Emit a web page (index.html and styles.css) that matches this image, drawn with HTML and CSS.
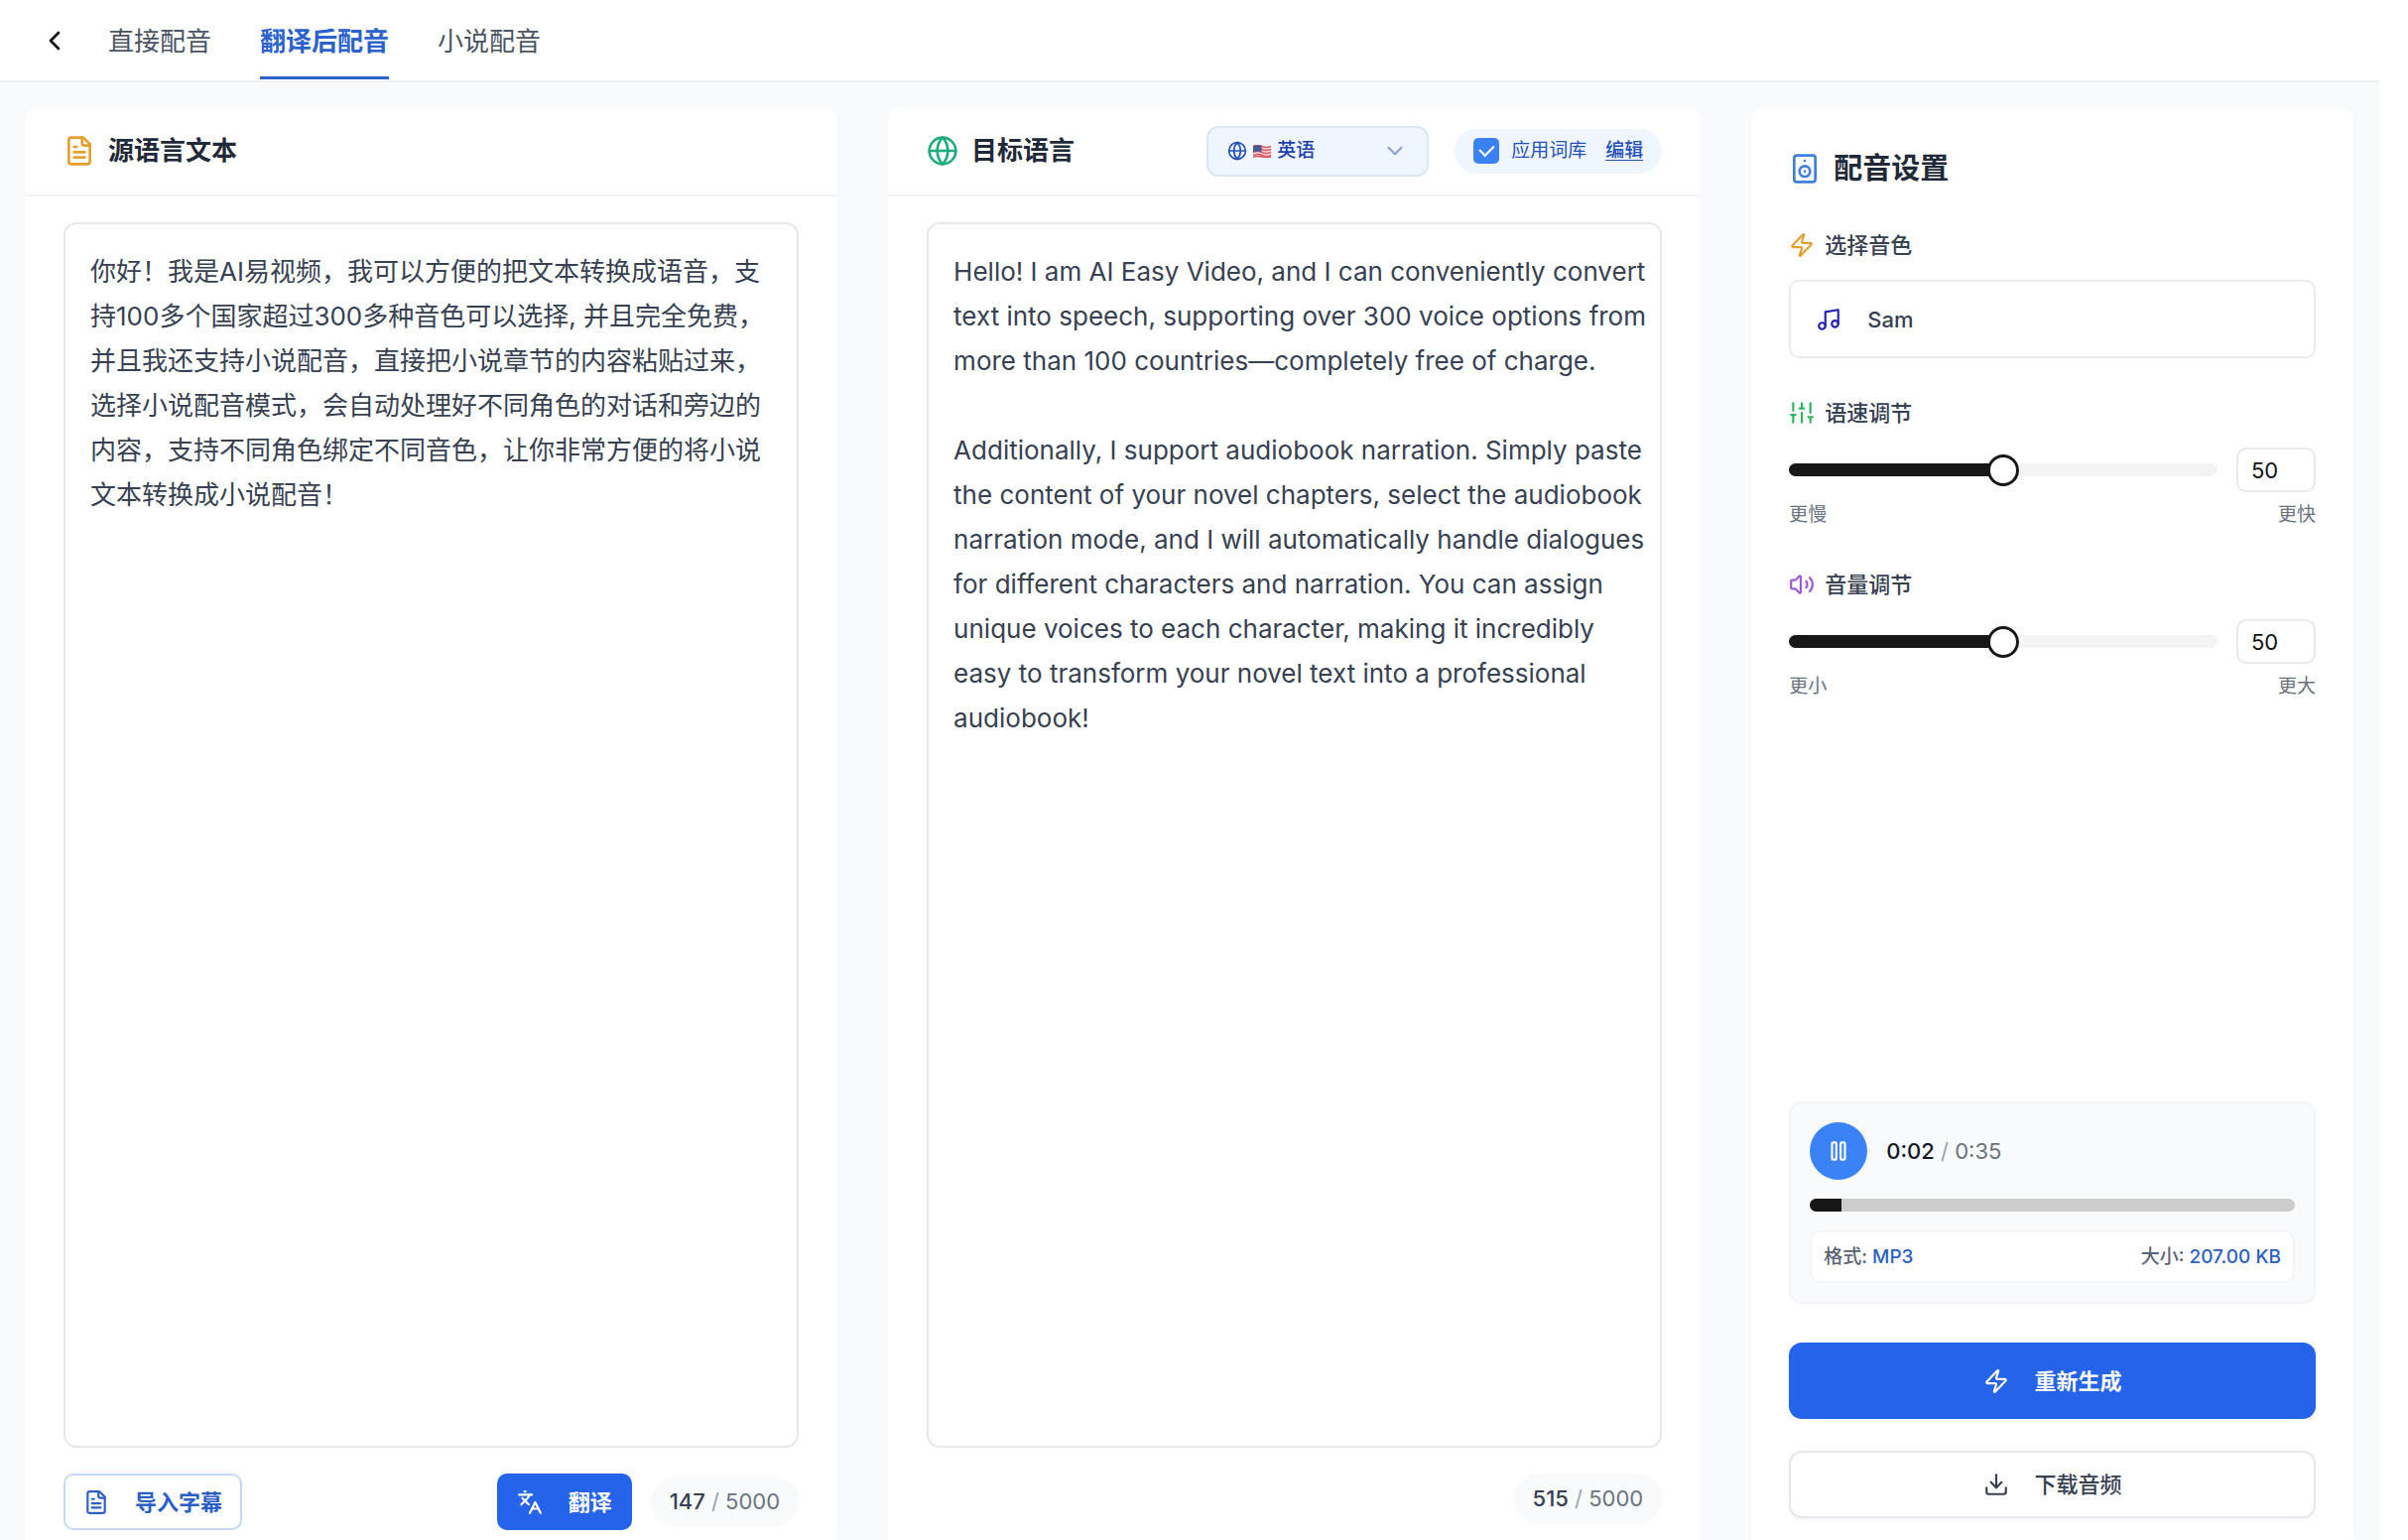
FILE: index.html
```html
<!DOCTYPE html>
<html lang="zh-CN">
<head>
  <meta charset="UTF-8" />
  <meta name="viewport" content="width=device-width, initial-scale=1.0" />
  <title>翻译后配音</title>
  <link rel="stylesheet" href="styles.css">
</head>
<body>
<header class="topbar">
  <button type="button" class="back-btn" aria-label="返回">
    <svg class="icon-lg" viewBox="0 0 24 24"><path d="m15 18-6-6 6-6"/></svg>
  </button>
  <nav class="tabs">
    <a href="#direct">直接配音</a>
    <a href="#translate" class="active">翻译后配音</a>
    <a href="#novel">小说配音</a>
  </nav>
</header>

<main class="workspace">
  <!-- source text -->
  <section class="card">
    <div class="card-header">
      <svg class="icon-lg amber" viewBox="0 0 24 24"><path d="M15 2H6a2 2 0 0 0-2 2v16a2 2 0 0 0 2 2h12a2 2 0 0 0 2-2V7Z"/><path d="M14 2v4a2 2 0 0 0 2 2h4"/><path d="M10 9H8"/><path d="M16 13H8"/><path d="M16 17H8"/></svg>
      <h2><label for="source">源语言文本</label></h2>
    </div>
    <div class="card-body">
      <textarea id="source" spellcheck="false">你好！我是AI易视频，我可以方便的把文本转换成语音，支持100多个国家超过300多种音色可以选择, 并且完全免费，并且我还支持小说配音，直接把小说章节的内容粘贴过来，选择小说配音模式，会自动处理好不同角色的对话和旁边的内容，支持不同角色绑定不同音色，让你非常方便的将小说文本转换成小说配音！</textarea>
      <div class="card-footer">
        <button type="button" class="btn btn-import">
          <svg class="icon-sm" viewBox="0 0 24 24"><path d="M15 2H6a2 2 0 0 0-2 2v16a2 2 0 0 0 2 2h12a2 2 0 0 0 2-2V7Z"/><path d="M14 2v4a2 2 0 0 0 2 2h4"/><path d="M10 9H8"/><path d="M16 13H8"/><path d="M16 17H8"/></svg>
          导入字幕
        </button>
        <div class="footer-right">
          <button type="button" class="btn btn-translate">
            <svg class="icon-sm" viewBox="0 0 24 24"><path d="M2 5h12"/><path d="M7 2h1"/><path d="m5 8 6 6"/><path d="m4 14 6-6 2-3"/><path d="m22 22-5-10-5 10"/><path d="M14 18h6"/></svg>
            翻译
          </button>
          <span class="counter"><b>147</b> <i>/</i> 5000</span>
        </div>
      </div>
    </div>
  </section>

  <!-- translated text -->
  <section class="card">
    <div class="card-header">
      <svg class="icon-lg green" viewBox="0 0 24 24"><circle cx="12" cy="12" r="10"/><path d="M12 2a14.500 14.500 0 0 0 0 20 14.500 14.500 0 0 0 0-20"/><path d="M2 12h20"/></svg>
      <h2><label for="target">目标语言</label></h2>
      <div class="header-tools">
        <div class="lang-select">
          <svg class="icon-xs" viewBox="0 0 24 24"><circle cx="12" cy="12" r="10"/><path d="M12 2a14.500 14.500 0 0 0 0 20 14.500 14.500 0 0 0 0-20"/><path d="M2 12h20"/></svg>
          <svg class="flag" viewBox="0 0 18 13">
            <path d="M0 1q4.500-2 9 0t9 0v11q-4.500 2-9 0t-9 0z" fill="#f3d9dc" stroke="none"/>
            <path d="M0 1.500q4.500-2 9 0t9 0M0 4.500q4.500-2 9 0t9 0M0 7.500q4.500-2 9 0t9 0M0 10.500q4.500-2 9 0t9 0M0 12q4.500-1 9 0t9 0" fill="none" stroke="#dd5b66" stroke-width="1.500"/>
            <path d="M0 1q4-1.600 8.500-.2v6.400q-4.500-1.400-8.500.2z" fill="#46588f" stroke="none"/>
          </svg>
          <select aria-label="目标语言">
            <option>英语</option>
          </select>
          <svg class="icon-sm chevron" viewBox="0 0 24 24"><path d="m6 9 6 6 6-6"/></svg>
        </div>
        <div class="glossary">
          <input type="checkbox" id="glossary" checked />
          <label for="glossary">应用词库</label>
          <a href="#glossary-edit">编辑</a>
        </div>
      </div>
    </div>
    <div class="card-body">
      <textarea id="target" lang="en" spellcheck="false">Hello! I am AI Easy Video, and I can conveniently convert text into speech, supporting over 300 voice options from more than 100 countries—completely free of charge.

Additionally, I support audiobook narration. Simply paste the content of your novel chapters, select the audiobook narration mode, and I will automatically handle dialogues for different characters and narration. You can assign unique voices to each character, making it incredibly easy to transform your novel text into a professional audiobook!</textarea>
      <div class="card-footer">
        <div class="footer-right">
          <span class="counter"><b>515</b> <i>/</i> 5000</span>
        </div>
      </div>
    </div>
  </section>

  <!-- voice settings -->
  <aside class="card settings">
    <h2 class="settings-title">
      <svg class="icon-lg blue" viewBox="0 0 24 24"><rect x="4" y="2" width="16" height="20" rx="2"/><path d="M12 6h.01"/><circle cx="12" cy="14" r="4"/><path d="M12 14h.01"/></svg>
      配音设置
    </h2>

    <div class="setting">
      <h3>
        <svg class="icon-sm amber" viewBox="0 0 24 24"><path d="M4 14a1 1 0 0 1-.78-1.630l9.900-10.200a.5.5 0 0 1 .86.460l-1.920 6.020A1 1 0 0 0 13 10h7a1 1 0 0 1 .78 1.630l-9.900 10.200a.5.5 0 0 1-.86-.460l1.920-6.020A1 1 0 0 0 11 14z"/></svg>
        选择音色
      </h3>
      <button type="button" class="voice-btn">
        <svg class="icon-sm" viewBox="0 0 24 24"><path d="M9 18V5l12-2v13"/><circle cx="6" cy="18" r="3"/><circle cx="18" cy="16" r="3"/></svg>
        Sam
      </button>
    </div>

    <div class="setting">
      <h3>
        <svg class="icon-sm lime" viewBox="0 0 24 24"><path d="M4 21v-7M4 10V3M12 21v-9M12 8V3M20 21v-5M20 12V3M2 14h4M10 8h4M18 16h4"/></svg>
        <label for="speed">语速调节</label>
      </h3>
      <div class="slider-row">
        <input type="range" id="speed" min="0" max="100" value="50" style="--value: 50%" />
        <input type="text" inputmode="numeric" value="50" aria-label="语速" />
      </div>
      <div class="range-labels"><span>更慢</span><span>更快</span></div>
    </div>

    <div class="setting">
      <h3>
        <svg class="icon-sm purple" viewBox="0 0 24 24"><path d="M11 4.700a.7.700 0 0 0-1.200-.5L6.400 7.600A1.400 1.400 0 0 1 5.400 8H3a1 1 0 0 0-1 1v6a1 1 0 0 0 1 1h2.400a1.400 1.400 0 0 1 1 .4l3.400 3.400a.7.700 0 0 0 1.200-.5z"/><path d="M16 9a5 5 0 0 1 0 6"/><path d="M19.400 18.400a9 9 0 0 0 0-12.700"/></svg>
        <label for="volume">音量调节</label>
      </h3>
      <div class="slider-row">
        <input type="range" id="volume" min="0" max="100" value="50" style="--value: 50%" />
        <input type="text" inputmode="numeric" value="50" aria-label="音量" />
      </div>
      <div class="range-labels"><span>更小</span><span>更大</span></div>
    </div>

    <div class="player">
      <div class="player-top">
        <button type="button" class="play-btn" aria-label="暂停">
          <svg class="icon-sm" viewBox="0 0 24 24"><rect x="14" y="4" width="4" height="16" rx="1"/><rect x="6" y="4" width="4" height="16" rx="1"/></svg>
        </button>
        <span class="time"><b>0:02</b> <i>/</i> 0:35</span>
      </div>
      <progress value="6.6" max="100" aria-label="播放进度"></progress>
      <div class="file-info">
        <span>格式: <em>MP3</em></span>
        <span>大小: <em>207.00 KB</em></span>
      </div>
    </div>

    <button type="button" class="btn btn-generate">
      <svg class="icon-sm" viewBox="0 0 24 24"><path d="M4 14a1 1 0 0 1-.78-1.630l9.900-10.200a.5.5 0 0 1 .86.460l-1.920 6.020A1 1 0 0 0 13 10h7a1 1 0 0 1 .78 1.630l-9.900 10.200a.5.5 0 0 1-.86-.460l1.920-6.020A1 1 0 0 0 11 14z"/></svg>
      重新生成
    </button>
    <button type="button" class="btn btn-download">
      <svg class="icon-sm" viewBox="0 0 24 24"><path d="M21 15v4a2 2 0 0 1-2 2H5a2 2 0 0 1-2-2v-4"/><path d="m7 10 5 5 5-5"/><path d="M12 15V3"/></svg>
      下载音频
    </button>
  </aside>
</main>

<script>
  document.querySelectorAll('.slider-row').forEach(row => {
    const range = row.querySelector('input[type="range"]');
    const box = row.querySelector('input[type="text"]');
    function update(value) {
      range.value = value;
      box.value = range.value;
      range.style.setProperty('--value', range.value + '%');
    }
    range.addEventListener('input', () => update(range.value));
    box.addEventListener('change', () => update(box.value));
  });
</script>
</body>
</html>
```
FILE: styles.css
```css
* {
  box-sizing: border-box;
}
body {
  margin: 0;
  padding-right: 29px;
  height: 100vh;
  display: flex;
  flex-direction: column;
  background: #fff;
  color: #374151;
  font-family: Inter, "Noto Sans CJK SC", sans-serif;
  font-size: 22px;
  line-height: 32px;
}
button, input, select, textarea {
  font: inherit;
  color: inherit;
}
button {
  cursor: pointer;
}
h2, h3 {
  margin: 0;
}
b, i, em {
  font-style: normal;
}
svg {
  flex: none;
  fill: none;
  stroke: currentColor;
  stroke-width: 2;
  stroke-linecap: round;
  stroke-linejoin: round;
}
.icon-xs {
  width: 20px;
  height: 20px;
}
.icon-sm {
  width: 26px;
  height: 26px;
}
.icon-lg {
  width: 32px;
  height: 32px;
}
.amber {
  color: #e5a02c;
}
.green {
  color: #22ab7c;
}
.lime {
  color: #2fb45c;
}
.blue {
  color: #3f7fdc;
}
.purple {
  color: #9b59dc;
}

/* top bar */
.topbar {
  display: flex;
  align-items: center;
  gap: 38px;
  height: 83px;
  flex: none;
  padding: 0 39px;
  border-bottom: 2px solid #eef0f3;
}
.back-btn {
  display: flex;
  padding: 0;
  border: none;
  background: none;
  color: #111;
}
.tabs {
  display: flex;
  gap: 49px;
  height: 100%;
}
.tabs a {
  height: 80px;
  line-height: 84px;
  font-size: 26px;
  color: #4b5563;
  text-decoration: none;
}
.tabs a.active {
  color: #2b62cc;
  font-weight: 600;
  border-bottom: 3px solid #2b62cc;
}

/* columns */
.workspace {
  flex: 1;
  min-height: 0;
  display: grid;
  grid-template-columns: 27fr 27fr 20fr;
  gap: 51px;
  padding: 25px 26px 0 25px;
  background: #f8fafc;
}
.card {
  display: flex;
  flex-direction: column;
  min-width: 0;
  background: #fff;
  border-radius: 13px 13px 0 0;
  box-shadow: 0 0 2px rgba(0, 0, 0, 0.04);
}
.card-header {
  display: flex;
  align-items: center;
  gap: 13px;
  height: 90px;
  padding: 0 39px;
  border-bottom: 2px solid #f1f3f5;
}
.card-header h2 {
  font-size: 26px;
  font-weight: 600;
  color: #1f2937;
}
.card-body {
  flex: 1;
  display: flex;
  flex-direction: column;
  padding: 26px 39px 10px;
}
.card-body textarea {
  flex: 1;
  width: 100%;
  padding: 25px 12px 25px 25px;
  border: 2px solid #e5e7eb;
  border-radius: 13px;
  background: #fff;
  font-size: 26px;
  line-height: 45px;
  resize: none;
  outline: none;
}
.card-footer {
  display: flex;
  justify-content: space-between;
  align-items: flex-start;
  height: 83px;
  padding-top: 26px;
}
.footer-right {
  display: flex;
  align-items: center;
  gap: 19px;
  margin-left: auto;
}
.counter {
  padding: 0 19px;
  line-height: 51px;
  border-radius: 26px;
  background: #f8fafc;
  color: #6b7280;
}
.counter b {
  font-weight: 500;
  color: #374151;
}
.counter i, .time i {
  color: #9ca3af;
}

/* buttons */
.btn {
  display: flex;
  align-items: center;
  justify-content: center;
  gap: 26px;
  height: 57px;
  padding: 0 18px;
  border: 2px solid transparent;
  border-radius: 10px;
  font-weight: 600;
}
.btn-import {
  background: #fff;
  border-color: #c5d9f2;
  color: #2b5fc4;
}
.btn-translate, .btn-generate {
  background: #2563eb;
  color: #fff;
}
.btn-generate {
  height: 77px;
  margin: 39px 0 32px;
  border-radius: 13px;
}
.btn-download {
  height: 68px;
  border-color: #e5e7eb;
  border-radius: 13px;
  background: #fff;
  font-weight: 500;
  box-shadow: 0 2px 3px rgba(0, 0, 0, 0.04);
}

/* target language tools */
.header-tools {
  display: flex;
  align-items: center;
  gap: 26px;
  margin-left: auto;
  font-size: 19px;
  color: #2450b8;
}
.lang-select {
  display: flex;
  align-items: center;
  gap: 6px;
  width: 224px;
  height: 51px;
  padding: 0 19px;
  border: 2px solid #dbe7f5;
  border-radius: 12px;
  background: #eff6ff;
}
.flag {
  width: 18px;
  height: 13px;
}
.lang-select select {
  flex: 1;
  min-width: 0;
  padding: 0;
  border: none;
  background: none;
  appearance: none;
  font-weight: 500;
  color: #1e40af;
  outline: none;
}
.chevron {
  color: #8ea2d8;
}
.glossary {
  display: flex;
  align-items: center;
  gap: 12px;
  height: 45px;
  padding: 0 19px;
  border-radius: 23px;
  background: #eff6ff;
}
.glossary input {
  appearance: none;
  display: grid;
  place-items: center;
  width: 26px;
  height: 26px;
  margin: 0;
  border-radius: 5px;
  background: #3b82f6;
}
.glossary input:checked::before {
  content: "";
  width: 7px;
  height: 12px;
  margin-bottom: 4px;
  border: solid #fff;
  border-width: 0 2px 2px 0;
  transform: rotate(45deg);
}
.glossary a {
  margin-left: 7px;
  color: #2450b8;
  font-weight: 500;
  text-underline-offset: 3px;
}

/* settings */
.settings {
  padding: 39px 38px 22px;
}
.settings-title {
  display: flex;
  align-items: center;
  gap: 13px;
  font-size: 29px;
  line-height: 45px;
  font-weight: 600;
  color: #1f2937;
}
.setting {
  margin-top: 39px;
}
.setting h3 {
  display: flex;
  align-items: center;
  gap: 10px;
  margin-bottom: 19px;
  font-size: 22px;
  font-weight: 500;
}
.voice-btn {
  display: flex;
  align-items: center;
  gap: 26px;
  width: 100%;
  height: 79px;
  padding: 0 25px;
  border: 2px solid #eaebed;
  border-radius: 10px;
  background: #fff;
  font-weight: 500;
}
.voice-btn svg {
  color: #2522b4;
}
.slider-row {
  display: flex;
  align-items: center;
  gap: 19px;
}
.slider-row input[type="range"] {
  appearance: none;
  flex: 1;
  min-width: 0;
  height: 13px;
  margin: 0;
  border-radius: 7px;
  background: linear-gradient(to right, #171717 var(--value), #f4f4f4 var(--value));
}
.slider-row input[type="range"]::-webkit-slider-thumb {
  appearance: none;
  width: 32px;
  height: 32px;
  border: 3px solid #171717;
  border-radius: 50%;
  background: #fff;
}
.slider-row input[type="text"] {
  width: 80px;
  height: 45px;
  padding: 0 13px;
  border: 2px solid #e8e9eb;
  border-radius: 10px;
  color: #111;
}
.range-labels {
  display: flex;
  justify-content: space-between;
  margin-top: 8px;
  font-size: 19px;
  line-height: 30px;
  color: #6b7280;
}

/* player */
.player {
  display: flex;
  flex-direction: column;
  gap: 19px;
  margin-top: auto;
  padding: 19px;
  border: 2px solid #f1f3f6;
  border-radius: 13px;
  background: #f8fafc;
}
.player-top {
  display: flex;
  align-items: center;
  gap: 19px;
}
.play-btn {
  display: grid;
  place-items: center;
  width: 58px;
  height: 58px;
  padding: 0;
  border: none;
  border-radius: 50%;
  background: #3b82f6;
  color: #fff;
}
.time {
  color: #6b7280;
}
.time b {
  font-weight: 500;
  color: #111827;
}
.player progress {
  appearance: none;
  display: block;
  width: 100%;
  height: 13px;
  border: none;
  border-radius: 7px;
  overflow: hidden;
}
.player progress::-webkit-progress-bar {
  background: #ccc;
}
.player progress::-webkit-progress-value {
  background: #171717;
}
.file-info {
  display: flex;
  justify-content: space-between;
  align-items: center;
  height: 53px;
  padding: 0 12px;
  border: 2px solid #f3f5f7;
  border-radius: 10px;
  background: #fff;
  font-size: 19px;
  font-weight: 500;
  color: #5b6472;
}
.file-info em {
  color: #2b5fc4;
}
```
